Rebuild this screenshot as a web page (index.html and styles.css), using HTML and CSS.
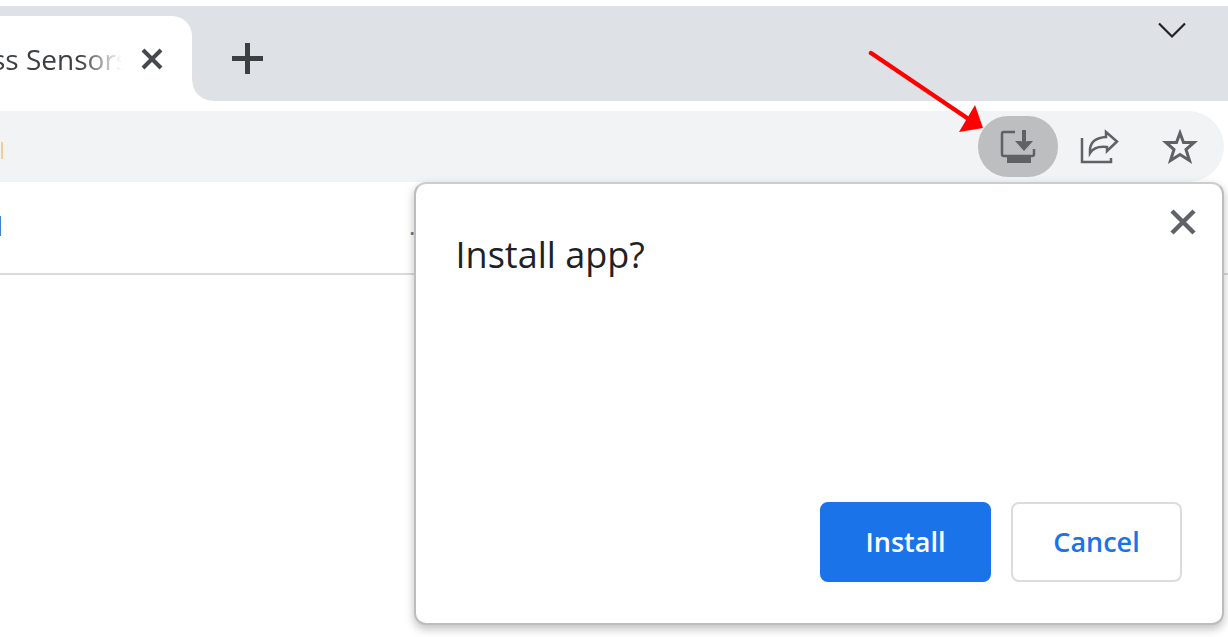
FILE: index.html
```html
<!DOCTYPE html>
<html lang="en">
<head>
<meta charset="utf-8">
<meta name="viewport" content="width=device-width, initial-scale=1">
<title>Install app</title>
<link rel="stylesheet" href="styles.css">
</head>
<body>
<div class="browser">
  <header class="tab-strip">
    <div class="tab">
      <span class="tab-title">ss Sensors</span>
      <button class="icon-button tab-close" aria-label="Close tab">
        <svg width="22" height="22" viewBox="0 0 22 22"><path d="M2 2L20 20M20 2L2 20" stroke="#45494d" stroke-width="4"/></svg>
      </button>
    </div>
    <button class="icon-button new-tab" aria-label="New tab">
      <svg width="32" height="32" viewBox="0 0 32 32"><path d="M15.500 0V31M0 15.500H31" stroke="#3c4043" stroke-width="5"/></svg>
    </button>
    <button class="icon-button tab-search" aria-label="Search tabs">
      <svg width="28" height="18" viewBox="0 0 28 18"><path d="M1 1.500L14 14.500L27 1.500" fill="none" stroke="#222" stroke-width="2.200"/></svg>
    </button>
  </header>
  <div class="toolbar">
    <div class="address-bar">
      <span class="address-end"></span>
      <div class="actions">
        <button class="icon-button install-icon" aria-label="Install app">
          <svg width="36" height="34" viewBox="0 0 36 34"><g fill="none" stroke="#5f6164"><path d="M15 2H3.500Q2 2 2 4V24Q2 26 4 26H32Q34 26 34 24V19" stroke-width="2.500"/><path d="M24 0V17" stroke-width="4"/></g><path d="M15 11L24 21L33 11H27L24 14L21 11Z" fill="#5f6164"/><path d="M7 27H31V33H7Z" fill="#5f6164"/></svg>
        </button>
        <button class="icon-button" aria-label="Share this page">
          <svg width="40" height="36" viewBox="0 0 40 36"><g fill="none" stroke="#5f6164" stroke-width="2.500"><path d="M2 9V33H31V29"/><path d="M10 24V20C11 12 17 8.500 26 8V3L37 12.500L27 22V18C18 17 13 19 10 24Z" stroke-width="2.500"/></g></svg>
        </button>
        <button class="icon-button" aria-label="Bookmark this tab">
          <svg width="36" height="36" viewBox="0 0 36 36"><path d="M18 4L21.500 13.500L32 13.500L24 20.500L27.500 31.500L18 25.500L8.500 31.500L12 20.500L4 13.500L14.500 13.500Z" fill="none" stroke="#5f6164" stroke-width="3"/></svg>
        </button>
      </div>
    </div>
  </div>
  <main class="page">
    <div class="page-header"><span class="page-link"></span><span class="page-more">..</span></div>
    <section class="dialog" role="dialog" aria-labelledby="dialog-title">
      <div class="dialog-header">
        <h1 class="dialog-title" id="dialog-title">Install app?</h1>
        <button class="icon-button dialog-close" aria-label="Close">
          <svg width="26" height="26" viewBox="0 0 26 26"><path d="M2 2L24 24M24 2L2 24" stroke="#5f6368" stroke-width="4.500"/></svg>
        </button>
      </div>
      <div class="dialog-buttons">
        <button class="button primary">Install</button>
        <button class="button">Cancel</button>
      </div>
    </section>
  </main>
  <svg class="pointer" width="116" height="84" viewBox="0 0 116 84" aria-hidden="true"><path d="M3 4L102 71" stroke="#f00" stroke-width="4.500" stroke-linecap="round"/><path d="M107 56L115 79L91 83Z" fill="#f00"/></svg>
</div>
</body>
</html>
```
FILE: styles.css
```css
* {
  box-sizing: border-box;
}

body {
  margin: 0;
  background: #fff;
  font-family: "Open Sans", "Noto Sans", sans-serif;
}

.browser {
  position: relative;
  display: flex;
  flex-direction: column;
  min-height: 100vh;
  padding-top: 6px;
  overflow: hidden;
}

.icon-button {
  display: flex;
  align-items: center;
  justify-content: center;
  padding: 0;
  border: 0;
  background: none;
}

.tab-strip {
  display: flex;
  padding-top: 10px;
  background: #dee1e6;
}

.tab {
  position: relative;
  display: flex;
  align-items: center;
  gap: 19px;
  height: 85px;
  padding-right: 29px;
  background: #fff;
  border-top-right-radius: 20px;
}

.tab::after {
  content: "";
  position: absolute;
  bottom: 0;
  left: 100%;
  width: 20px;
  height: 20px;
  background: radial-gradient(circle at 100% 0, transparent 19px, #fff 20px);
}

.tab-title {
  width: 122px;
  overflow: hidden;
  color: #3c4043;
  font-size: 28px;
  line-height: 40px;
  text-indent: -8px;
  white-space: nowrap;
  mask-image: linear-gradient(to right, #000 80px, transparent 122px);
}

.new-tab {
  margin-left: 40px;
}

.tab-search {
  align-self: flex-start;
  margin: 6px 42px 0 auto;
}

.toolbar {
  padding: 10px 4px 0 0;
}

.address-bar {
  display: flex;
  align-items: center;
  justify-content: space-between;
  height: 71px;
  padding-right: 26px;
  background: #f1f3f4;
  border-radius: 0 36px 36px 0;
}

.address-end {
  width: 2px;
  height: 17px;
  margin: 8px 0 0 1px;
  background: #f3cf98;
}

.actions {
  display: flex;
  align-items: center;
  gap: 22px;
}

.actions .icon-button + .icon-button + .icon-button {
  margin-left: 20px;
}

.install-icon {
  width: 80px;
  height: 61px;
  background: #bdbec0;
  border-radius: 30px;
}

.page {
  position: relative;
  flex: 1;
}

.page-header {
  display: flex;
  align-items: center;
  height: 93px;
  padding-bottom: 4px;
  border-bottom: 2px solid #dadada;
}

.page-link {
  width: 1px;
  height: 20px;
  background: #3d86cc;
}

.page-more {
  margin-left: 408px;
  color: #60758a;
  font-size: 24px;
  line-height: 32px;
}

.dialog {
  position: absolute;
  top: 0;
  right: 4px;
  display: flex;
  flex-direction: column;
  justify-content: space-between;
  width: 66%;
  min-height: 443px;
  padding: 25px 40px 41px;
  background: #fff;
  border: 2px solid #bdbdbd;
  border-top-color: #cdcdcd;
  border-radius: 12px;
  box-shadow: 0 4px 10px rgba(0, 0, 0, 0.25);
}

.dialog-header {
  display: flex;
  align-items: flex-start;
  justify-content: space-between;
}

.dialog-title {
  margin: 18px 0 0;
  color: #202124;
  font-size: 36px;
  font-weight: 400;
  line-height: 56px;
}

.dialog-close {
  margin-right: -14px;
}

.dialog-buttons {
  display: flex;
  justify-content: flex-end;
  gap: 20px;
}

.button {
  width: 171px;
  height: 80px;
  padding: 0;
  background: #fff;
  border: 2px solid #dadce0;
  border-radius: 8px;
  color: #1a73e8;
  font: 600 27px/40px "Open Sans", "Noto Sans", sans-serif;
}

.primary {
  background: #1a73e8;
  border-color: #1a73e8;
  color: #fff;
}

.pointer {
  position: absolute;
  top: 49px;
  right: 244px;
}
```
